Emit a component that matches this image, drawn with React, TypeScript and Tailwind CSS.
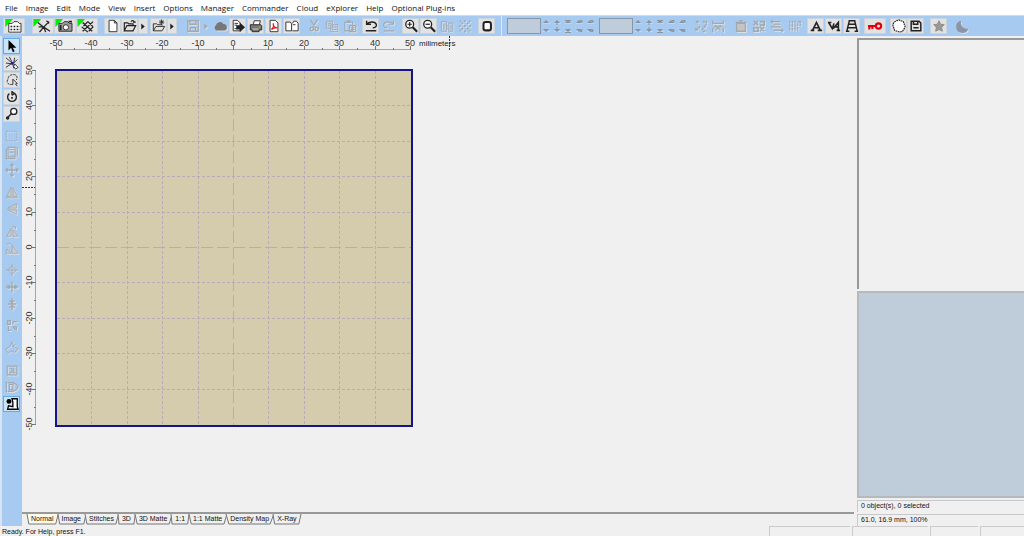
import { useState } from "react";
import type { ReactNode } from "react";
import clsx from "clsx";

const menus = [
  "File", "Image", "Edit", "Mode", "View", "Insert", "Options", "Manager",
  "Commander", "Cloud", "eXplorer", "Help", "Optional Plug-ins",
];

const tabs = ["Normal", "Image", "Stitches", "3D", "3D Matte", "1:1", "1:1 Matte", "Density Map", "X-Ray"];

const paper = "#fff";

// all icons are drawn on a 16x16 grid
const icons: Record<string, ReactNode> = {
  design: (<><path d="M-2 0h9l-9 9z" fill="#00f000" stroke="none" /><path d="M2 5h4l2-2h4l2 2h2v10H2z" fill={paper} /><path d="M4 8.500h11M4 12h11" strokeDasharray="2 1.500" strokeWidth="1.600" /></>),
  wand: (<><path d="M-3 0h9l-9 9z" fill="#00f000" stroke="none" /><path d="M2 4l5 4 9 6M4 15l5-6 6-6M9 9l-6 0M9 9l2 6M12 2l3 3" strokeWidth="1.500" /></>),
  camera: (<><path d="M-3 0h9l-9 9z" fill="#00f000" stroke="none" /><path d="M1 5h4l2-2h4l2 2h3v9H1z" fill="#999" /><circle cx="9" cy="9.500" r="3" fill={paper} /><path d="M3 7v6" strokeWidth="2" /><path d="M12 3h4" strokeWidth="2" /></>),
  cross: (<><path d="M-3 0h9l-9 9z" fill="#00f000" stroke="none" /><path d="M3 4l11 10M2 9l7 6M9 3l6 6M3 14L15 3M4 8l5-5M10 14l5-5" strokeWidth="1.500" /></>),
  page: <path d="M3.500 1.500h6l3 3v10h-9zM9.500 1.500v3h3" fill={paper} />,
  open: <path d="M1.500 13.500v-9h4l1 1h5v2M1.500 13.500l3-6h10l-3 6zM9 3c2-2 4-1 4 1M11.500 3.500h3" fill="none" strokeWidth="1.300" />,
  openAdd: <path d="M1.500 13.500v-8h4l1 1h5v1M1.500 13.500l3-5h10l-3 5zM11 0.500v6M8 3.500h6M9 1.500l4 4M13 1.500l-4 4" />,
  arrow: <path d="M6 5l4 3.500L6 12z" fill="currentColor" stroke="none" />,
  save: <path d="M2 2h12v12H2zM4.500 2v4h7V2M5 14v-4h6v4" strokeWidth="1.500" />,
  cloud: <path d="M4 12.500a3 3 0 0 1 0-5 4 4 0 0 1 7.500-1 3 3 0 0 1 1 6z" fill="#777" stroke="#777" strokeWidth="1.500" />,
  export: (<><path d="M2.500 1.500h5l3 3v9h-8z" fill={paper} /><path d="M4 5h4M4 7h3M4 11h5" /><path d="M6 7h4V4l6 5.500-6 5.500v-3H6z" fill="currentColor" stroke="none" /></>),
  print: (<><path d="M5 6l1-4h7l-1 4" fill={paper} /><path d="M1.500 6.500h12l1 1v5h-3v2h-8v-2h-2z" fill="#777" /><path d="M4 11.500h7" stroke="#ddd" /><path d="M11 9h2" stroke="#c5c000" /></>),
  pdf: (<><path d="M3.500 1.500h6l3 3v10h-9z" fill={paper} /><path d="M5 12c3-3 3-5 2-7 0 4 2 5 5 5-3 0-5 0-7 2" stroke="#e11" strokeWidth="1.300" /></>),
  book: <path d="M1 3.500h5l1.500 2v8H1zM8.500 5L10 2.500h3l2 2.500v8.500H8.500M9 6.500h3" fill={paper} />,
  cut: <path d="M4 1l6 9M12 1L6 10M5.500 9.500a2 2 0 1 0 0 4 2 2 0 0 0 0-4M11 9.500a2 2 0 1 0 0 4 2 2 0 0 0 0-4" strokeWidth="1.500" />,
  copy: <path d="M1.500 2.500h7v8h-7zM6.500 6.500h8v8h-8zM3 5h4M3 7h3M8 9h5M8 12h5" />,
  paste: <path d="M2 3.500h9v10H2zM5 2h3v2H5zM7.500 7.500h7v7h-7zM9 10h4M9 12h4" strokeWidth="1.300" />,
  undo: <path d="M3 6c3-4 10-3 11 0s-2 4-4 4M3 2v4h5M2 13.500h12" strokeWidth="1.600" />,
  redo: <path d="M13 6C10 2 3 3 2 6s2 4 4 4M13 2v4H8M2 13.500h12" strokeWidth="1.400" />,
  zoomIn: (<><circle cx="6.500" cy="6" r="4.500" fill={paper} strokeWidth="1.500" /><path d="M4 6h5M6.500 3.500v5" strokeWidth="1.400" /><path d="M10 9.500l5 5" strokeWidth="2.500" /></>),
  zoomOut: (<><circle cx="6.500" cy="6" r="4.500" fill={paper} strokeWidth="1.500" /><path d="M4 6h5" strokeWidth="1.400" /><path d="M10 9.500l5 5" strokeWidth="2.500" /></>),
  oneToOne: <path d="M1.500 14V3h6v11zM4.500 6v6M10 4.500h4.500V14H10zM12.500 7v5M8.500 7v1M8.500 10v1" />,
  fit: <path d="M2 2l4 4M14 2l-4 4M2 14l4-4M14 14l-4-4M7 8h2M1 8h2M13 8h2M8 1v2M8 13v2" strokeWidth="2" strokeDasharray="2 1" />,
  hoop: <rect x="4" y="3.500" width="8.500" height="9.500" rx="2.500" fill={paper} strokeWidth="2.300" />,
  nodes: <path d="M2 3h4M4 2v4M10 3h4v4M2 13V9M3 13l4-5M9 12l5-5M10 14h4" strokeWidth="2.200" strokeDasharray="2.500 1" />,
  nodesWide: <path d="M2 2v4M14 2v4M2 5h12M3 9h10M2 10v5M14 10v5M5 7l6 6M11 7l-6 6" strokeWidth="1.600" />,
  trash: <path d="M3 5h10v9H3zM2 4h12M6 2h4" fill="#c4c4c4" strokeWidth="1.500" />,
  mix: <path d="M2 2l5 5M7 2L2 7M9 3h5v4H9M2 10h5v4H2zM9 9l5 5M14 9l-5 5" strokeWidth="1.800" />,
  swap: <path d="M1 3h11M4 6h8M1 9h12M4 13h11M3 1L1 3l2 2M13 11l2 2-2 2" strokeWidth="1.300" />,
  bars: <path d="M2 2v12M5 2v12M8 2v12M11 5v9M14 2v6M11 3h4" strokeWidth="1.300" strokeDasharray="3 1" />,
  keyRed: <path d="M12 5a3 3 0 1 1 0 6 3 3 0 0 1 0-6zM9 8H0M1.500 8v4M5 8v3.500" stroke="#e0000c" strokeWidth="2.400" />,
  blob: <path d="M5 2l3-1 2 1 3 1 1 3 1 2-1 3-2 3-3 1-3-1-3-1-1-3-1-3 1-3z" fill={paper} strokeDasharray="2 0.700" strokeWidth="1.300" />,
  disk: <path d="M2.500 2.500h9l2 2v9h-11zM5 3v3h5V3M5 10h6" strokeWidth="1.700" />,
  star: <path d="M8 2l1.800 4 4.200.5-3 3 .8 4.500L8 12l-3.800 2 .8-4.500-3-3L6.200 6z" fill="#999" stroke="#888" />,
  moon: <path d="M7 2a7 7 0 1 0 8 9A7 7 0 0 1 7 2z" fill="#8b95a6" stroke="none" />,
  pointer: <path d="M4 1v12l3-3 2 5 2-1-2-4h4z" fill="currentColor" stroke="none" />,
  stitch: (<><path d="M1 2l7 6M5 1l3 6M1 8l7 1M1 13l6-4M10 8l1-6M10 8l4-4M9 9l1 5" /><circle cx="8.500" cy="8.500" r="1.600" fill="#1919b0" stroke="none" /><path d="M11 9l4 4-3 2-2-3z" fill={paper} /></>),
  lasso: (<><path d="M9 13c-5 1-8-2-6-5 1-2 0-5 5-6s7 2 5 6" strokeDasharray="3 1" fill="none" /><path d="M9 7l5 5-2 .5 2 2.500M9 7v6" fill="none" /></>),
  rotate: <path d="M5 4a5 5 0 1 0 6 0M8 1v5M8 2l3 2-3 2M8 8v2M7 9h2" strokeWidth="1.600" />,
  magnify: (<><circle cx="10" cy="5" r="3.500" fill={paper} strokeWidth="1.500" /><path d="M7.500 7.500L3 12" strokeWidth="1.500" /><circle cx="3" cy="12.500" r="2" fill="currentColor" stroke="none" /></>),
  select: <path d="M1.500 2.500h12v11h-12z" strokeDasharray="2 1" />,
  frames: <path d="M3.500 1.500h8v11h-8zM1.500 3v11.500H12M14 1v11M5 4h5M5 7h5" strokeWidth="1.300" />,
  move: <path d="M8 1v14M1 8h14M6 3l2-2 2 2M6 13l2 2 2-2M3 6L1 8l2 2M13 6l2 2-2 2" strokeWidth="1.500" />,
  mirrorH: <path d="M7 3v10H2zM9 3v10h5zM1 14.500h14" fill="#ccc" />,
  mirrorV: <path d="M13 2v5H3zM13 9v5L3 9z" fill="#ccc" />,
  turnLeft: <path d="M7 5v9H2zM9 7v7h6zM8 3h4v3" fill="#ccc" />,
  turnRight: <path d="M2 3h4l3 3M2 9l5 5H1zM8 5l7 9H8z" fill="#ccc" />,
  centre: <path d="M8 1v14M1 8h14M8 3l5 5-5 5-5-5z" />,
  alignH: <path d="M1 8h14M5 6v4M11 6v4M8 2v12M3 6l2 2-2 2M13 6l-2 2 2 2" strokeWidth="1.500" />,
  alignV: <path d="M8 1v14M3 8h10M5 4l3 2 3-2M5 12l3-2 3 2" strokeWidth="1.700" />,
  group: <path d="M3 2h3v4H3zM9 3h5M9 3v3M4 8v5h3M9 9h4v4M9 9l3 3" strokeWidth="1.500" />,
  shape: <path d="M1 9l5-3 2-5 2 6 5 2-4 4-4-2-3 3-2-3zM8 6l4-2" />,
  box: <path d="M2.500 3.500h11v10h-11zM5 6h3v5H5M10 5v6h2" strokeWidth="1.300" />,
  lens: <path d="M1.500 2v12M3 3h6M3 13h6M5 5v6h4V5zM9 3l4 2 2 3-2 3-4 2" strokeWidth="1.300" />,
  machine: (<><path d="M8 2h6v9l1 3H3l1-4 5 1V6z" fill={paper} strokeWidth="1.500" /><circle cx="4.500" cy="5" r="2.800" fill="currentColor" stroke="none" /></>),
  textA: <path d="M2 13h4M10 13h5M4 13L8.500 4 13 13M5.500 10h6" strokeWidth="1.900" />,
  textVA: <path d="M1 4h4M2 4l4 7 2-6M7 11l6-7v9M9 9h4M11 13h4" strokeWidth="1.800" />,
  textArc: <path d="M4 2h8M5 2L2 14M11 2l3 12M4 6h8M3 10h10M1 14h4M11 14h4" strokeWidth="1.600" />,
};

const Icon = ({ name }: { name: string }) => (
  <svg viewBox="0 0 16 16" className="h-3.5 w-3.5 shrink-0 overflow-visible" fill="none" stroke="currentColor" aria-hidden="true">
    {icons[name]}
  </svg>
);

type ToolProps = { name: string; off?: boolean; size?: "wide" | "slim"; active?: boolean };

const Tool = ({ name, off, size, active }: ToolProps) => (
  <button
    aria-label={name}
    disabled={off}
    className={clsx(
      "flex h-4 shrink-0 items-center justify-center overflow-hidden border",
      size === "wide" ? "w-[22px]" : size === "slim" ? "w-2.5" : "w-[17px]",
      off && "border-transparent text-[#a2a9b0] drop-shadow-[1px_1px_0_#d8dee5]",
      active && "border-[#68a9df] bg-[#cce4f8] text-black",
      !off && !active && "border-[#cbd3dc] bg-[#e2e2e2] text-[#222]"
    )}
  >
    <Icon name={name} />
  </button>
);

const Group = ({ children, className }: { children: ReactNode; className?: string }) => (
  <div className={clsx("flex shrink-0 items-center", className)}>{children}</div>
);

const Spinners = () => (
  <div className="flex gap-[3px] pl-px">
    {[0, 1, 2, 3, 4].map((n) => (
      <svg key={n} viewBox="0 0 8 16" className="h-4 w-2" fill="#8d939a" stroke="#8d939a" aria-hidden="true">
        <path d="M1 5.500h7M1 13.500h7" stroke="#d0d4d8" />
        <path d="M1 5l3-3 3 3zM1 11l3 3 3-3z" stroke="none" />
        {n === 1 && <path d="M4 3v4M4 9v3" />}
        {n === 2 && <path d="M1 2.500h6M1 14.500h6" />}
        {n > 2 && <path d="M5 2.500h2v2M5 13.500h2v-2" />}
      </svg>
    ))}
  </div>
);

const Toolbar = () => (
  <div className="flex h-[21px] shrink-0 items-center overflow-hidden border-t border-[#d4dbe2] bg-[#a6caf0] pl-[3px]">
    <Group><Tool name="design" size="wide" /></Group>
    <Group className="ml-[7px]">
      <Tool name="wand" size="wide" />
      <Tool name="camera" size="wide" />
      <Tool name="cross" size="wide" />
    </Group>
    <Group className="ml-1.5">
      <Tool name="page" />
      <Tool name="open" />
      <Tool name="arrow" size="slim" />
    </Group>
    <Group className="ml-0.5">
      <Tool name="openAdd" />
      <Tool name="arrow" size="slim" />
    </Group>
    <Group className="ml-[7px]">
      <Tool name="save" off />
      <Tool name="arrow" size="slim" off />
      <Tool name="cloud" off />
    </Group>
    <Group className="ml-px gap-px">
      <Tool name="export" />
      <Tool name="print" />
      <Tool name="pdf" />
      <Tool name="book" />
    </Group>
    <Group className="ml-[5px] gap-px">
      <Tool name="cut" off />
      <Tool name="copy" off />
      <Tool name="paste" off />
    </Group>
    <Group className="ml-1 gap-px">
      <Tool name="undo" />
      <Tool name="redo" off />
    </Group>
    <Group className="ml-[5px] gap-px">
      <Tool name="zoomIn" />
      <Tool name="zoomOut" />
      <Tool name="oneToOne" off />
      <Tool name="fit" off />
    </Group>
    <Group className="ml-[5px]"><Tool name="hoop" /></Group>
    <div className="ml-1.5 h-full w-px shrink-0 bg-[#dce9f7]" />
    <Group className="ml-[5px]">
      <input aria-label="Width" disabled className="h-4 w-[34px] border border-[#8797a8] bg-[#bfcddb]" />
      <Spinners />
    </Group>
    <Group className="ml-[5px]">
      <input aria-label="Height" disabled className="h-4 w-[34px] border border-[#8797a8] bg-[#bfcddb]" />
      <Spinners />
    </Group>
    <Group className="ml-1.5">
      <Tool name="nodes" off />
      <Tool name="nodesWide" off />
    </Group>
    <Group className="ml-1.5 gap-px">
      <Tool name="trash" off />
      <Tool name="mix" off />
      <Tool name="swap" off />
      <Tool name="bars" off />
    </Group>
    <Group className="ml-1 gap-px">
      <Tool name="textA" />
      <Tool name="textVA" />
      <Tool name="textArc" />
    </Group>
    <Group className="ml-1"><Tool name="keyRed" size="wide" /></Group>
    <Group className="ml-1">
      <Tool name="blob" />
      <Tool name="disk" />
    </Group>
    <Group className="ml-1.5 gap-1.5">
      <Tool name="star" />
      <Tool name="moon" off />
    </Group>
  </div>
);

const SideTools = () => (
  <div className="flex w-[22px] shrink-0 flex-col items-start gap-1.5 border-l-2 border-[#d8e4f0] bg-[#a6caf0] pl-px pt-0.5">
    <div className="flex flex-col gap-px">
      <Tool name="pointer" active />
      <Tool name="stitch" />
      <Tool name="lasso" />
      <Tool name="rotate" />
      <Tool name="magnify" />
    </div>
    <div className="flex flex-col gap-px">
      <Tool name="select" off />
      <Tool name="frames" off />
      <Tool name="move" off />
    </div>
    <div className="flex flex-col gap-px">
      <Tool name="mirrorH" off />
      <Tool name="mirrorV" off />
    </div>
    <div className="flex flex-col gap-px">
      <Tool name="turnLeft" off />
      <Tool name="turnRight" off />
    </div>
    <div className="flex flex-col gap-px">
      <Tool name="centre" off />
      <Tool name="alignH" off />
      <Tool name="alignV" off />
    </div>
    <Tool name="group" off />
    <Tool name="shape" off />
    <div className="flex flex-col gap-px">
      <Tool name="box" off />
      <Tool name="lens" off />
      <Tool name="machine" active />
    </div>
  </div>
);

// hoop is 100 x 100 mm, one ruler step is 10 mm
const C = 211;
const STEP = 35.4;
const HALF = STEP * 5;
const marks = [-50, -40, -30, -20, -10, 0, 10, 20, 30, 40, 50];

const Hoop = () => (
  <svg width="440" height="396" viewBox="0 0 440 396" className="block shrink-0" fill="none" fontSize="9">
    <rect x="34" y="34" width="356" height="356" fill="#d5cbad" stroke="#14148c" strokeWidth="2" />
    {marks.slice(1, -1).map((m) => {
      const p = Math.round(C + (m / 10) * STEP) + 0.5;
      return (
        <g key={m} stroke="#b7acb9" strokeDasharray={m === 0 ? "12 4" : "3 2"}>
          <path d={`M${p} 35V389`} />
          <path d={`M35 ${p}H389`} />
        </g>
      );
    })}
    <path d={`M35 13.5H${C + HALF}M13.5 35V${C + HALF}`} stroke="#a5a5a5" />
    {marks.map((m) => {
      const p = Math.round(C + (m / 10) * STEP);
      const half = p + 18;
      return (
        <g key={m} stroke="#777">
          <path d={`M${p + 0.5} 10V14M10 ${p + 0.5}H14`} />
          {m < 50 && <path d={`M${half + 0.5} 12V14M12 ${half + 0.5}H14`} />}
          <text x={p} y="10" textAnchor="middle" fill="#333" stroke="none">{m}</text>
          <text transform={`translate(10 ${p}) rotate(-90)`} textAnchor="middle" fill="#333" stroke="none">{-m}</text>
        </g>
      );
    })}
    <text x="397" y="10" fontSize="8" fill="#222">milimeters</text>
    <path d="M427.500 0V14M0 151.500H13" stroke="#333" strokeDasharray="2 1" />
  </svg>
);

const Tabs = () => {
  const [tab, setTab] = useState("Normal");

  return (
    <div className="flex h-[14px] shrink-0 items-start border-t-2 border-[#999] pl-[5px]">
      {tabs.map((t) => (
        <button
          key={t}
          onClick={() => setTab(t)}
          className="relative flex h-2.5 items-center whitespace-nowrap px-1 text-[7px] leading-[10px]"
        >
          <svg viewBox="0 0 100 10" preserveAspectRatio="none" className="absolute inset-0 h-full w-full overflow-visible" aria-hidden="true">
            <path d="M0 0L6 10H94L102 0" fill={tab === t ? "#fffbe8" : "#f0f0f0"} stroke="#777" vectorEffect="non-scaling-stroke" />
          </svg>
          <span className="relative">{t}</span>
        </button>
      ))}
    </div>
  );
};

export default function App() {
  return (
    <div className="flex h-screen flex-col overflow-hidden bg-[#f0f0f0] font-['Liberation_Sans',Arial,sans-serif] text-[#111]">
      <nav className="flex h-[15px] shrink-0 items-center gap-2 bg-white pl-[5px] font-['Open_Sans',sans-serif] text-[8px] leading-3">
        {menus.map((m) => (
          <button key={m} className="whitespace-nowrap">{m}</button>
        ))}
      </nav>
      <Toolbar />

      <div className="flex min-h-0 flex-1">
        <SideTools />
        <main className="flex min-w-0 flex-1 flex-col">
          <div className="min-h-0 flex-1 overflow-hidden">
            <Hoop />
          </div>
          <Tabs />
        </main>

        {/* Preview and object list */}
        <aside className="ml-[3px] flex w-[167px] shrink-0 flex-col gap-0.5 pt-0.5 text-[7px] leading-[10px]">
          <div className="flex-[11] border-l-2 border-t-2 border-[#999]" />
          <div className="flex-[9] border-y-2 border-l-2 border-[#b4b9be] bg-[#bfcddb]" />
          <p className="h-3 border-l border-t border-[#c8c8c8] pl-[3px]">0 object(s), 0 selected</p>
          <p className="h-3 border-l border-t border-[#c8c8c8] pl-[3px]">61.0, 16.9 mm, 100%</p>
        </aside>
      </div>

      <footer className="flex h-2.5 shrink-0 gap-0.5 text-[7px] leading-3">
        <span className="flex-1 pl-0.5">Ready. For Help, press F1.</span>
        <span className="w-[81px] border-l border-t border-[#ccc]" />
        <span className="w-[76px] border-l border-t border-[#ccc]" />
        <span className="w-12 border-l border-t border-[#ccc]" />
        <span className="w-11 border-l border-t border-[#ccc]" />
      </footer>
    </div>
  );
}
